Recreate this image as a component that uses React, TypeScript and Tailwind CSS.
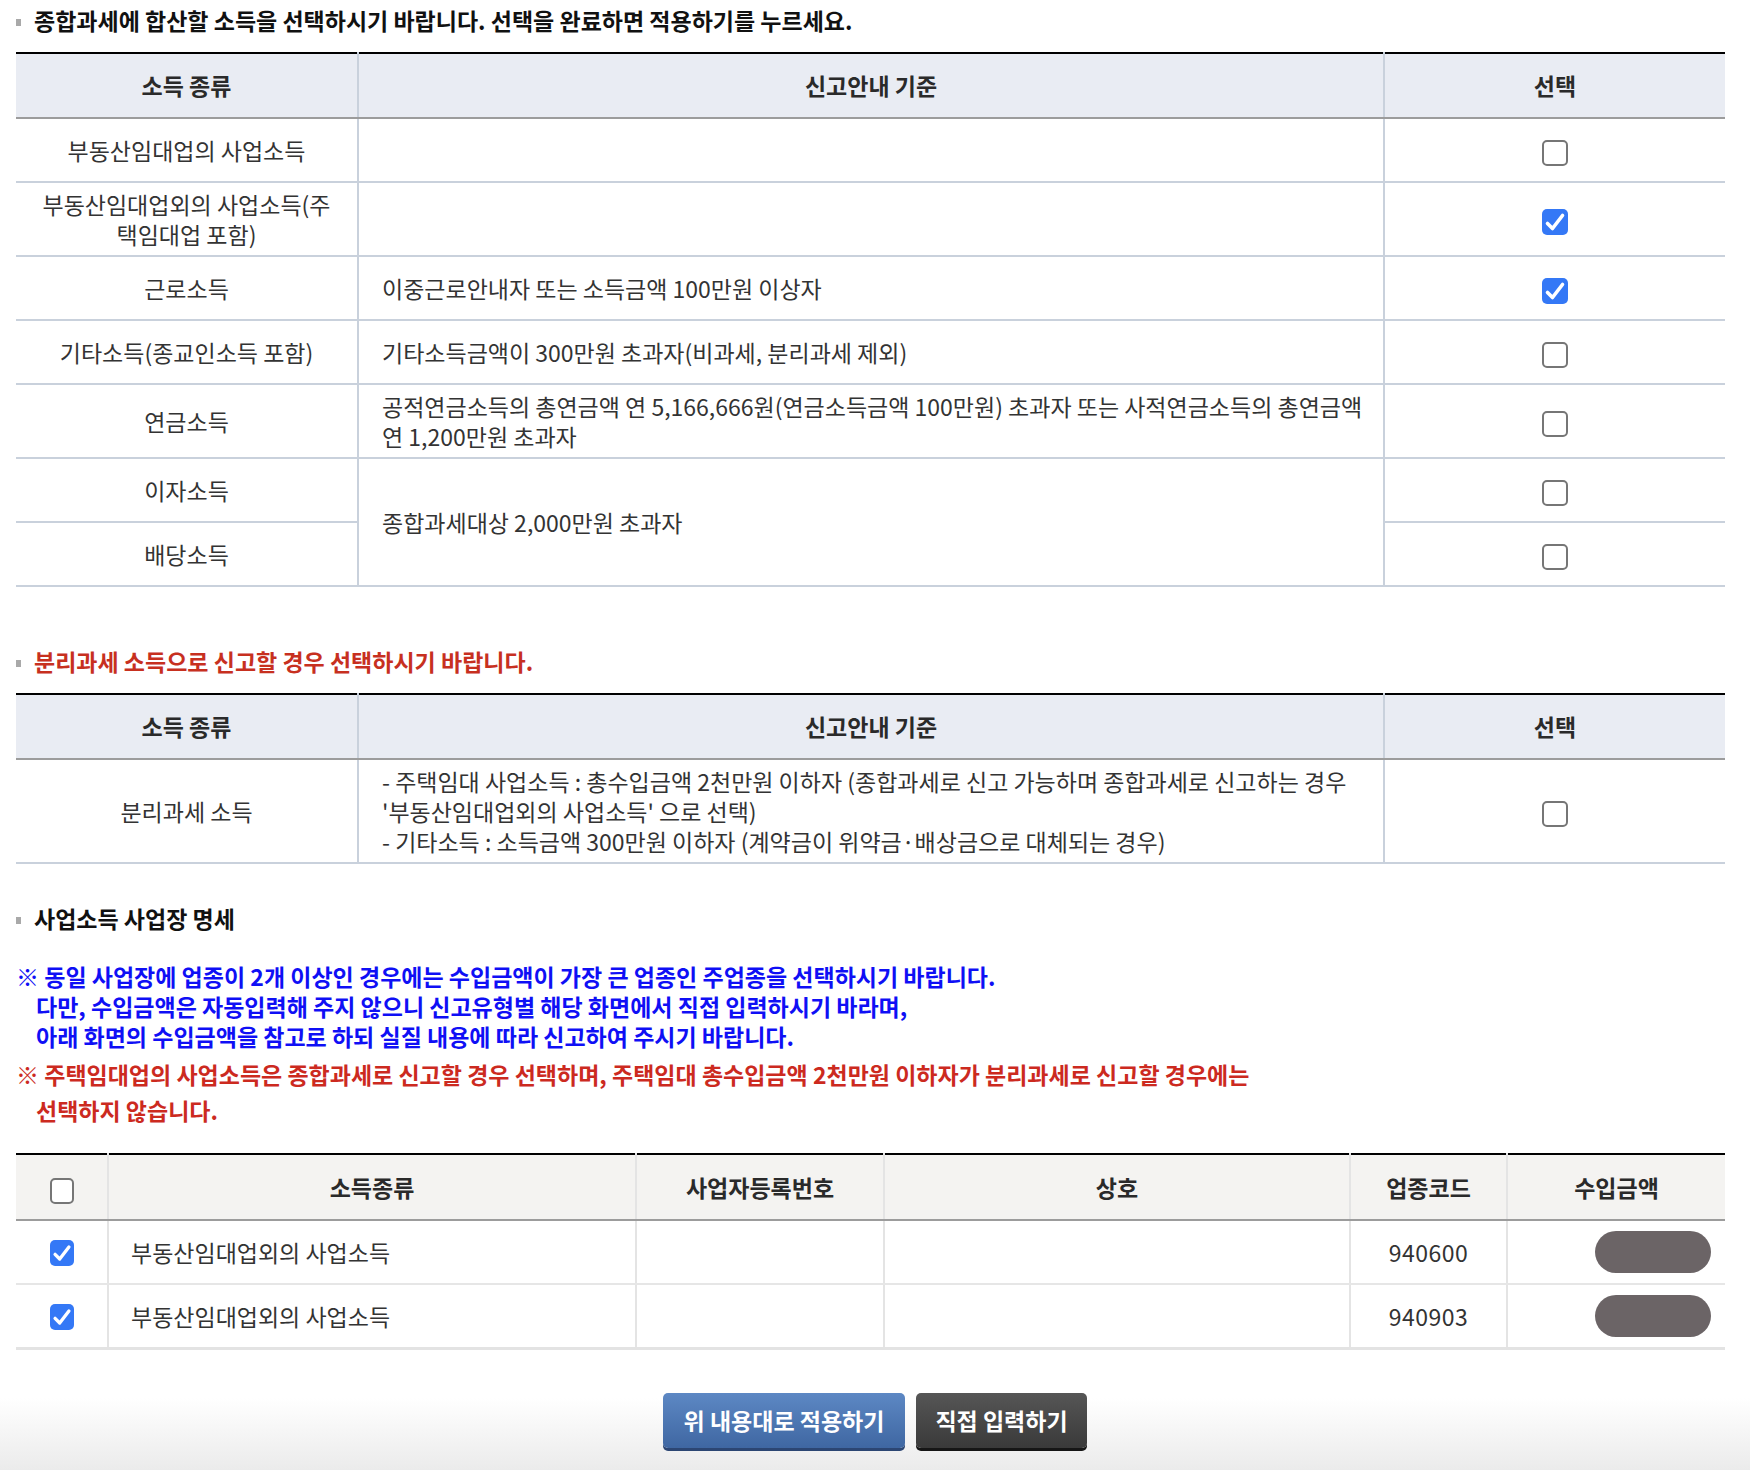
import React from 'react';

const font = "font-['Noto_Sans_CJK_KR','Noto_Sans',sans-serif]";

const CheckBox: React.FC<{ checked?: boolean; small?: boolean }> = ({ checked, small }) => {
  const size = small ? 'w-[24px] h-[26px]' : 'w-[26px] h-[26px]';
  if (!checked) {
    return <span className={`inline-block ${size} rounded-[5px] border-2 border-[#767676] bg-white align-middle`} />;
  }
  return (
    <span className={`inline-flex items-center justify-center ${size} rounded-[5px] bg-[#3478f6] align-middle`}>
      <svg viewBox="0 0 26 26" className="w-full h-full">
        <path d="M5.5 14.5 L10.5 19.5 L20.5 6.5" fill="none" stroke="#fff" strokeWidth="3.6" strokeLinecap="round" strokeLinejoin="round" />
      </svg>
    </span>
  );
};

const SectionTitle: React.FC<{ children: React.ReactNode; className?: string }> = ({ children, className = '' }) => (
  <div className={`flex items-center h-[30px] text-[23px] font-bold leading-[30px] whitespace-nowrap ${className}`}>
    <span className="inline-block w-[5px] h-[7px] bg-[#a9a9a9] mr-[13px] mt-[4px]" />
    <span>{children}</span>
  </div>
);

interface IncomeRow {
  label: React.ReactNode;
  guide?: React.ReactNode;
  checked: boolean;
  span?: number;
  skipGuide?: boolean;
}

const incomeRows: IncomeRow[] = [
  { label: '부동산임대업의 사업소득', guide: '', checked: false },
  { label: <>부동산임대업외의 사업소득(주<br />택임대업 포함)</>, guide: '', checked: true },
  { label: '근로소득', guide: '이중근로안내자 또는 소득금액 100만원 이상자', checked: true },
  { label: '기타소득(종교인소득 포함)', guide: '기타소득금액이 300만원 초과자(비과세, 분리과세 제외)', checked: false },
  {
    label: '연금소득',
    guide: <>공적연금소득의 총연금액 연 5,166,666원(연금소득금액 100만원) 초과자 또는 사적연금소득의 총연금액<br />연 1,200만원 초과자</>,
    checked: false,
  },
  { label: '이자소득', guide: '종합과세대상 2,000만원 초과자', checked: false, span: 2 },
  { label: '배당소득', checked: false, skipGuide: true },
];

const th1 = 'h-[65px] p-0 text-[23px] font-bold text-[#2a2a2a] text-center border-b-2 border-b-[#9c9c9c]';
const td1 = 'h-[64px] py-[6px] leading-[30px] text-[23px] text-[#333] border-b-2 border-b-[#c9d1dc]';

const bizRows = [
  { type: '부동산임대업외의 사업소득', code: '940600' },
  { type: '부동산임대업외의 사업소득', code: '940903' },
];

export default function App() {
  return (
    <div className={`${font} w-full min-h-[1470px] bg-white flex flex-col text-[#222]`}>
      <div className="px-[16px] pt-[5px] w-[1741px]">
        <SectionTitle className="text-[#111]">종합과세에 합산할 소득을 선택하시기 바랍니다. 선택을 완료하면 적용하기를 누르세요.</SectionTitle>

        <table className="mt-[17px] w-[1709px] table-fixed border-collapse border-t-2 border-t-black">
          <colgroup>
            <col className="w-[342px]" />
            <col className="w-[1026px]" />
            <col className="w-[341px]" />
          </colgroup>
          <thead>
            <tr className="bg-[#e9ecf3]">
              <th className={`${th1} border-r-2 border-r-[#c9d1dc]`}>소득 종류</th>
              <th className={`${th1} border-r-2 border-r-[#c9d1dc]`}>신고안내 기준</th>
              <th className={th1}>선택</th>
            </tr>
          </thead>
          <tbody>
            {incomeRows.map((r, i) => (
              <tr key={i}>
                <td className={`${td1} text-center border-r-2 border-r-[#c9d1dc]`}>{r.label}</td>
                {!r.skipGuide && (
                  <td rowSpan={r.span} className={`${td1} pl-[23px] pr-[10px] text-left border-r-2 border-r-[#c9d1dc] whitespace-nowrap`}>
                    {r.guide}
                  </td>
                )}
                <td className={`${td1} text-center`}>
                  <CheckBox checked={r.checked} />
                </td>
              </tr>
            ))}
          </tbody>
        </table>

        <SectionTitle className="mt-[59px] text-[#c7301f]">분리과세 소득으로 신고할 경우 선택하시기 바랍니다.</SectionTitle>

        <table className="mt-[17px] w-[1709px] table-fixed border-collapse border-t-2 border-t-black">
          <colgroup>
            <col className="w-[342px]" />
            <col className="w-[1026px]" />
            <col className="w-[341px]" />
          </colgroup>
          <thead>
            <tr className="bg-[#e9ecf3]">
              <th className={`${th1} border-r-2 border-r-[#c9d1dc]`}>소득 종류</th>
              <th className={`${th1} border-r-2 border-r-[#c9d1dc]`}>신고안내 기준</th>
              <th className={th1}>선택</th>
            </tr>
          </thead>
          <tbody>
            <tr>
              <td className={`${td1} text-center border-r-2 border-r-[#c9d1dc]`}>분리과세 소득</td>
              <td className={`${td1} pl-[23px] pr-[10px] text-left border-r-2 border-r-[#c9d1dc] whitespace-nowrap`}>
                - 주택임대 사업소득 : 총수입금액 2천만원 이하자 (종합과세로 신고 가능하며 종합과세로 신고하는 경우
                <br />
                '부동산임대업외의 사업소득' 으로 선택)
                <br />- 기타소득 : 소득금액 300만원 이하자 (계약금이 위약금·배상금으로 대체되는 경우)
              </td>
              <td className={`${td1} text-center`}>
                <CheckBox />
              </td>
            </tr>
          </tbody>
        </table>

        <SectionTitle className="mt-[39px] text-[#111]">사업소득 사업장 명세</SectionTitle>

        <p className="mt-[28px] text-[23px] font-bold leading-[30px] text-[#0f0ff5] whitespace-nowrap">
          ※ 동일 사업장에 업종이 2개 이상인 경우에는 수입금액이 가장 큰 업종인 주업종을 선택하시기 바랍니다.
          <br />
          <span className="pl-[20px]">다만, 수입금액은 자동입력해 주지 않으니 신고유형별 해당 화면에서 직접 입력하시기 바라며,</span>
          <br />
          <span className="pl-[20px]">아래 화면의 수입금액을 참고로 하되 실질 내용에 따라 신고하여 주시기 바랍니다.</span>
        </p>
        <p className="mt-[5px] text-[23px] font-bold leading-[36px] text-[#cc2a1f] whitespace-nowrap">
          ※ 주택임대업의 사업소득은 종합과세로 신고할 경우 선택하며, 주택임대 총수입금액 2천만원 이하자가 분리과세로 신고할 경우에는
          <br />
          <span className="pl-[20px]">선택하지 않습니다.</span>
        </p>

        <table className="mt-[25px] w-[1709px] table-fixed border-collapse border-t-2 border-t-black border-b-[3px] border-b-[#e3e3e3]">
          <colgroup>
            <col className="w-[92px]" />
            <col className="w-[528px]" />
            <col className="w-[248px]" />
            <col className="w-[466px]" />
            <col className="w-[157px]" />
            <col className="w-[218px]" />
          </colgroup>
          <thead>
            <tr className="bg-[#f4f3f1]">
              {['', '소득종류', '사업자등록번호', '상호', '업종코드', '수입금액'].map((h, i) => (
                <th
                  key={i}
                  className={`h-[66px] p-0 text-[23px] font-bold text-[#2a2a2a] text-center border-b-2 border-b-[#9c9c9c] ${i < 5 ? 'border-r-2 border-r-[#e4e4e4]' : ''}`}
                >
                  {i === 0 ? <CheckBox small /> : h}
                </th>
              ))}
            </tr>
          </thead>
          <tbody>
            {bizRows.map((r, i) => (
              <tr key={i}>
                <td className="h-[64px] text-center border-r-2 border-r-[#e4e4e4] border-b-2 border-b-[#e6e6e6]">
                  <CheckBox checked small />
                </td>
                <td className="h-[64px] pl-[22px] text-[23px] text-[#333] border-r-2 border-r-[#e4e4e4] border-b-2 border-b-[#e6e6e6]">{r.type}</td>
                <td className="h-[64px] border-r-2 border-r-[#e4e4e4] border-b-2 border-b-[#e6e6e6]" />
                <td className="h-[64px] border-r-2 border-r-[#e4e4e4] border-b-2 border-b-[#e6e6e6]" />
                <td className="h-[64px] text-center text-[23px] text-[#333] tracking-[0.5px] border-r-2 border-r-[#e4e4e4] border-b-2 border-b-[#e6e6e6]">{r.code}</td>
                <td className="h-[64px] pr-[14px] border-b-2 border-b-[#e6e6e6]">
                  <div className="ml-auto w-[116px] h-[42px] rounded-full bg-[#6b6466]" />
                </td>
              </tr>
            ))}
          </tbody>
        </table>
      </div>

      <div className="flex-1 flex justify-center gap-[11px] pt-[43px] bg-linear-to-b from-white from-[40%] to-[#ebebeb]">
        <button className="w-[242px] h-[55px] rounded-[5px] bg-linear-to-b from-[#5d88c4] to-[#3f67a2] shadow-[0_3px_0_#2c4673] text-white text-[23px] font-bold">
          위 내용대로 적용하기
        </button>
        <button className="w-[171px] h-[55px] rounded-[5px] bg-linear-to-b from-[#565656] to-[#3a3a3a] shadow-[0_3px_0_#161616] text-white text-[23px] font-bold">
          직접 입력하기
        </button>
      </div>
    </div>
  );
}
